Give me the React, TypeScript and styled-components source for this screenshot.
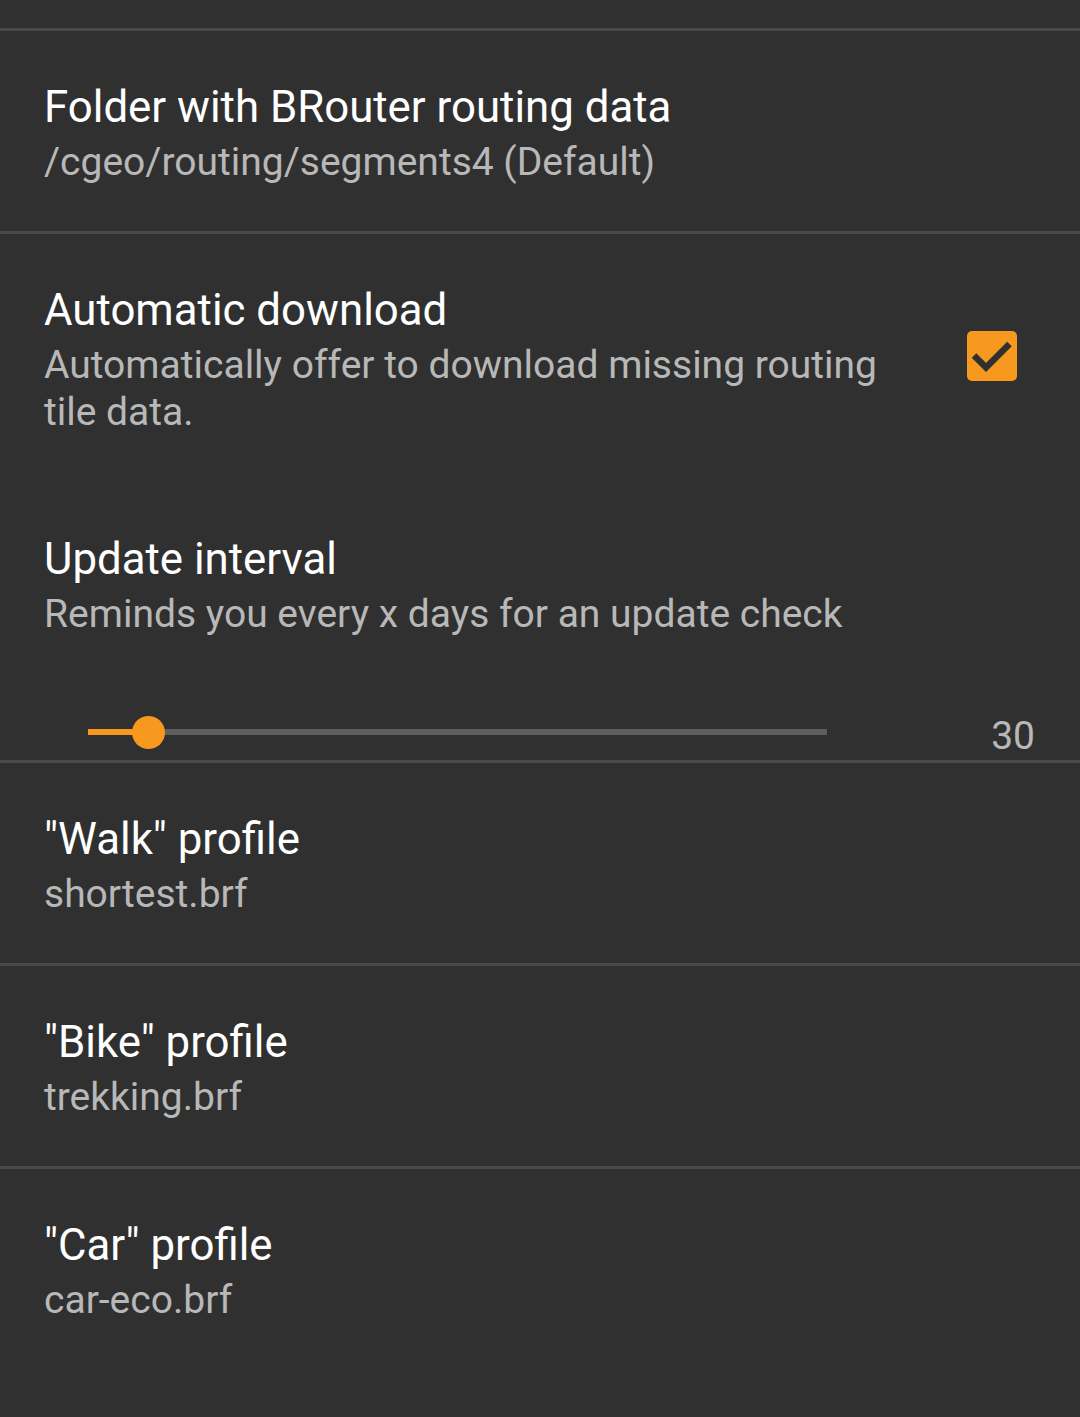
import React from 'react';
import styled, {createGlobalStyle} from 'styled-components';

const colors = {
    bg: '#303030',
    divider: '#4a4a4a',
    title: '#ffffff',
    summary: '#b8b8b8',
    accent: '#f7991f',
    track: '#5e5e5e',
}

const GlobalStyle = createGlobalStyle`
    html, body {
        margin: 0;
        padding: 0;
        background: ${colors.bg};
    }
    * {
        box-sizing: border-box;
    }
`

type Pref = { title: string; summary: string }

const profiles: Pref[] = [
    {title: '"Walk" profile', summary: 'shortest.brf'},
    {title: '"Bike" profile', summary: 'trekking.brf'},
    {title: '"Car" profile', summary: 'car-eco.brf'},
]

export default function App() {
    const value = 30
    const max = 365
    const percent = (value / max) * 100

    return (
        <>
            <GlobalStyle/>
            <Screen>
                <TopSpace/>

                <PrefRow $divider>
                    <TextBlock>
                        <Title>Folder with BRouter routing data</Title>
                        <Summary>/cgeo/routing/segments4 (Default)</Summary>
                    </TextBlock>
                </PrefRow>

                <PrefRow>
                    <TextBlock $narrow>
                        <Title>Automatic download</Title>
                        <Summary>Automatically offer to download missing routing tile data.</Summary>
                    </TextBlock>
                    <CheckBox>
                        <svg width="50" height="50" viewBox="0 0 50 50">
                            <path d="M7 24.5 L19 36.5 L42.5 13" fill="none" stroke={colors.bg} strokeWidth="6.5"/>
                        </svg>
                    </CheckBox>
                </PrefRow>

                <SeekRow $divider>
                    <TextBlock>
                        <Title>Update interval</Title>
                        <Summary>Reminds you every x days for an update check</Summary>
                    </TextBlock>
                    <SliderLine>
                        <Track>
                            <TrackFill style={{width: `${percent}%`}}/>
                            <Thumb style={{left: `${percent}%`}}/>
                        </Track>
                        <SeekValue>{value}</SeekValue>
                    </SliderLine>
                </SeekRow>

                {profiles.map((p, i) => (
                    <PrefRow key={p.title} $divider={i < profiles.length - 1}>
                        <TextBlock>
                            <Title>{p.title}</Title>
                            <Summary>{p.summary}</Summary>
                        </TextBlock>
                    </PrefRow>
                ))}
            </Screen>
        </>
    );
}

const Screen = styled.div`
    min-height: 1417px;
    background: ${colors.bg};
    font-family: Roboto, 'Noto Sans', sans-serif;
    display: flex;
    flex-direction: column;
`

const TopSpace = styled.div`
    height: 31px;
    border-bottom: 3px solid ${colors.divider};
`

const PrefRow = styled.div<{ $divider?: boolean }>`
    display: flex;
    align-items: center;
    min-height: 203px;
    padding: 50px 63px 45px 44px;
    border-bottom: 3px solid ${p => p.$divider ? colors.divider : 'transparent'};
`

const SeekRow = styled.div<{ $divider?: boolean }>`
    display: flex;
    flex-direction: column;
    padding: 49px 45px 4px 44px;
    border-bottom: 3px solid ${p => p.$divider ? colors.divider : 'transparent'};
`

const TextBlock = styled.div<{ $narrow?: boolean }>`
    flex: 1;
    display: flex;
    flex-direction: column;
    padding-right: ${p => p.$narrow ? '48px' : '0'};
`

const Title = styled.div`
    font-size: 43.8px;
    line-height: 52px;
    color: ${colors.title};
`

const Summary = styled.div`
    font-size: 39px;
    line-height: 47px;
    margin-top: 6px;
    color: ${colors.summary};
`

const CheckBox = styled.div`
    width: 50px;
    height: 50px;
    margin-top: -8px;
    border-radius: 5px;
    background: ${colors.accent};
    flex-shrink: 0;
    display: flex;
    svg {
        display: block;
    }
`

const SliderLine = styled.div`
    display: flex;
    align-items: center;
    height: 48px;
    margin-top: 70px;
    padding-left: 44px;
`

const Track = styled.div`
    position: relative;
    width: 739px;
    height: 6px;
    background: ${colors.track};
`

const TrackFill = styled.div`
    position: absolute;
    left: 0;
    top: 0;
    bottom: 0;
    background: ${colors.accent};
`

const Thumb = styled.div`
    position: absolute;
    top: 50%;
    width: 33px;
    height: 33px;
    margin-left: -16.5px;
    margin-top: -16.5px;
    border-radius: 50%;
    background: ${colors.accent};
`

const SeekValue = styled.div`
    margin-left: auto;
    padding-top: 8px;
    font-size: 39px;
    line-height: 47px;
    color: ${colors.summary};
`
